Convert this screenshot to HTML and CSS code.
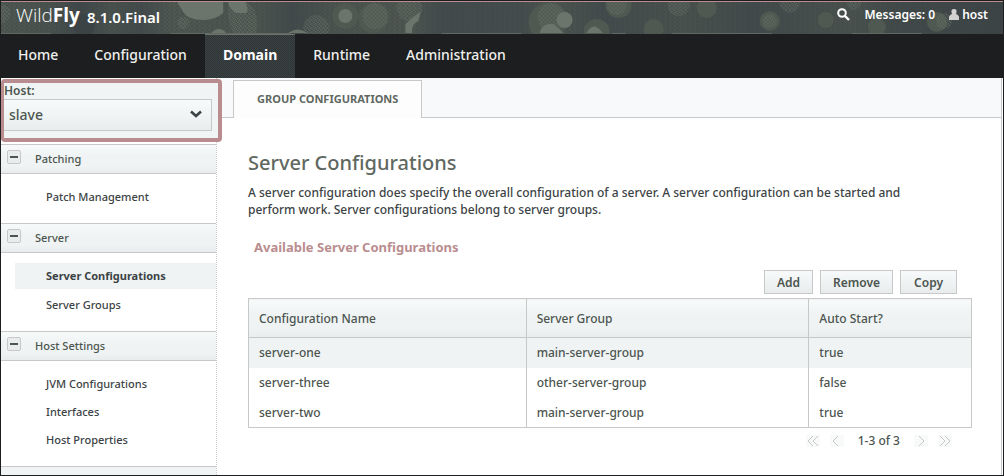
FILE: index.html
```
<!DOCTYPE html>
<html lang="en">
<head>
<meta charset="utf-8">
<title>WildFly Management</title>
<link rel="stylesheet" href="styles.css">
</head>
<body>
<div class="app">
  <header class="banner">
    <svg class="banner-art" viewBox="0 0 1001 33" preserveAspectRatio="xMidYMin slice" aria-hidden="true">
      <defs>
        <linearGradient id="shade">
          <stop offset="0" stop-color="#505952"/><stop offset=".05" stop-color="#4a534e"/><stop offset=".08" stop-color="#3f474a"/>
          <stop offset=".11" stop-color="#4a534e"/><stop offset=".14" stop-color="#434b4c"/><stop offset=".17" stop-color="#505952"/>
          <stop offset=".26" stop-color="#4c554f"/><stop offset=".29" stop-color="#424a4b"/><stop offset=".33" stop-color="#4c554f"/>
          <stop offset=".41" stop-color="#4f5851"/><stop offset=".44" stop-color="#434b4c"/><stop offset=".52" stop-color="#454d4d"/>
          <stop offset=".55" stop-color="#4f5851"/><stop offset=".6" stop-color="#434b4c"/><stop offset=".68" stop-color="#4a534e"/>
          <stop offset=".75" stop-color="#424a4b"/><stop offset=".85" stop-color="#4a534e"/><stop offset=".9" stop-color="#414949"/>
          <stop offset="1" stop-color="#3c4345"/>
        </linearGradient>
        <pattern id="grain" width="5" height="4" patternUnits="userSpaceOnUse">
          <path d="M0 0h1v1h-1zM2 1h1v1h-1zM4 2h1v1h-1zM1 3h1v1h-1z" fill="#3c4345"/>
        </pattern>
        <pattern id="speck" width="4" height="4" patternUnits="userSpaceOnUse">
          <path d="M0 0h1v1h-1zM2 1h1v1h-1zM1 2h1v1h-1zM3 3h1v1h-1z" fill="#6b756c"/>
        </pattern>
      </defs>
      <rect width="1001" height="33" fill="url(#shade)"/>
      <rect width="1001" height="33" fill="url(#grain)"/>
      <circle cx="83" cy="23" r="11" fill="#3c4345"/>
      <g fill="#4f5951">
        <circle cx="344" cy="14" r="13"/><circle cx="372" cy="16" r="15"/><circle cx="705" cy="6" r="10"/>
        <circle cx="768" cy="19" r="10"/><circle cx="546" cy="20" r="19"/><circle cx="617" cy="3" r="13"/>
        <circle cx="652" cy="27" r="10"/><circle cx="824" cy="18" r="8"/><circle cx="595" cy="30" r="13"/>
        <circle cx="875" cy="25" r="9"/><circle cx="935" cy="20" r="10"/>
      </g>
      <g fill="#6b756c">
        <path d="M176 0h46v11q-8 7-20 7q-15 0-20-8zM227 0h17q4 8 1 11h-10q-7-4-8-11z"/><circle cx="344" cy="14" r="7"/>
        <circle cx="563" cy="18" r="8"/><path d="M538 31q2-10 14-9l10 9zM585 31q7-13 16 0zM287 31q9-7 19 0z"/>
        <path d="M210 31q8-8 15 0zM404 22q8-8 15-12l-2 9q-8 4-6 12h-7z"/>
      </g>
      <g fill="url(#speck)">
        <path d="M0 2q10 2 9 10q-2 8-9 9zM227 0h19q14 12 9 32h-22q-8-14-6-32z"/>
        <circle cx="182" cy="21" r="6"/><circle cx="315" cy="26" r="13"/><circle cx="374" cy="14" r="13"/>
        <circle cx="408" cy="6" r="13"/><circle cx="550" cy="15" r="14"/><circle cx="615" cy="3" r="10"/>
        <circle cx="677" cy="3" r="11"/><circle cx="768" cy="19" r="7"/>
        <circle cx="788" cy="1" r="10"/><circle cx="852" cy="1" r="7"/><circle cx="942" cy="19" r="8"/>
      </g>
      <path d="M0 31h50M170 31h120M440 31h80M610 31h14M670 31h100M850 31h70" transform="translate(0 .5)" fill="none" stroke="#5f6861"/>
    </svg>
    <div class="brand"><span class="logo">Wild<b>Fly</b></span><span class="version">8.1.0.Final</span></div>
    <div class="tools">
      <button class="search" aria-label="Search">
        <svg width="13" height="13" viewBox="0 0 13 13"><circle cx="5" cy="5" r="3.8" fill="none" stroke="#fff" stroke-width="2"/><path d="M8 8l4 4" stroke="#fff" stroke-width="2.4"/></svg>
      </button>
      <a href="#" class="messages">Messages: 0</a>
      <a href="#" class="user"><svg width="10" height="11" viewBox="0 0 10 11" aria-hidden="true"><path d="M5 0q3 0 2.500 3q0 1.500-.7 2q3.200 1 3.200 3.500v2.500h-10v-2.500q0-2.500 3.200-3.500q-.7-.5-.7-2q-.5-3 2.500-3z" fill="#d2d2d0"/></svg>host</a>
    </div>
  </header>
  <nav class="nav">
    <a href="#">Home</a><a href="#">Configuration</a><a href="#" class="current">Domain</a><a href="#">Runtime</a><a href="#">Administration</a>
  </nav>
  <div class="body">
    <aside class="sidebar">
      <div class="host">
        <label for="host">Host:</label>
        <div class="host-field">
          <select id="host"><option>slave</option></select>
          <svg class="chevron" width="12" height="8" viewBox="0 0 12 8" aria-hidden="true"><path d="M1 1.500l5 4.500l5-4.500" fill="none" stroke="#3c4345" stroke-width="2.600"/></svg>
        </div>
      </div>
      <section>
        <h2><button class="fold" aria-label="Collapse Patching"></button>Patching</h2>
        <ul><li><a href="#">Patch Management</a></li></ul>
      </section>
      <section>
        <h2><button class="fold" aria-label="Collapse Server"></button>Server</h2>
        <ul class="roomy"><li><a href="#" class="selected">Server Configurations</a></li><li><a href="#">Server Groups</a></li></ul>
      </section>
      <section>
        <h2><button class="fold" aria-label="Collapse Host Settings"></button>Host Settings</h2>
        <ul><li><a href="#">JVM Configurations</a></li><li><a href="#">Interfaces</a></li><li><a href="#">Host Properties</a></li></ul>
      </section>
      <div class="sidebar-end"></div>
    </aside>
    <main class="main">
      <div class="tabs"><a href="#" class="tab">GROUP CONFIGURATIONS</a></div>
      <div class="content">
        <h1>Server Configurations</h1>
        <p>A server configuration does specify the overall configuration of a server. A server configuration can be started and perform work. Server configurations belong to server groups.</p>
        <h3>Available Server Configurations</h3>
        <div class="actions"><button>Add</button><button>Remove</button><button>Copy</button></div>
        <table>
          <colgroup><col class="col-name"><col class="col-group"><col class="col-auto"></colgroup>
          <thead><tr><th>Configuration Name</th><th>Server Group</th><th>Auto Start?</th></tr></thead>
          <tbody>
            <tr class="picked"><td>server-one</td><td>main-server-group</td><td>true</td></tr>
            <tr><td>server-three</td><td>other-server-group</td><td>false</td></tr>
            <tr><td>server-two</td><td>main-server-group</td><td>true</td></tr>
          </tbody>
        </table>
        <div class="pager">
          <button aria-label="First page"><svg width="14" height="12" viewBox="0 0 14 12"><path d="M7 1l-5 5l5 5M12 1l-5 5l5 5"/></svg></button>
          <button aria-label="Previous page"><svg width="14" height="12" viewBox="0 0 14 12"><path d="M8 1l-5 5l5 5"/></svg></button>
          <span>1-3 of 3</span>
          <button aria-label="Next page"><svg width="14" height="12" viewBox="0 0 14 12"><path d="M5 1l5 5l-5 5"/></svg></button>
          <button aria-label="Last page"><svg width="14" height="12" viewBox="0 0 14 12"><path d="M2 1l5 5l-5 5M7 1l5 5l-5 5"/></svg></button>
        </div>
      </div>
    </main>
  </div>
</div>
</body>
</html>
```
FILE: styles.css
```
* { box-sizing: border-box; }
body { margin: 0; font-family: "Noto Sans", "Open Sans", sans-serif; font-size: 12px; color: #3c4345; background: #fff; }
a { color: inherit; text-decoration: none; }
button { font: inherit; color: inherit; margin: 0; padding: 0; cursor: pointer; }
h1, h2, h3, p, ul { margin: 0; padding: 0; font-weight: 400; }
ul { list-style: none; }

.app { display: flex; flex-direction: column; min-height: 100vh; border: 1px solid #1c1e20; }
.banner { position: relative; display: flex; justify-content: space-between; height: 33px; padding: 0 15px; border-top: 1px solid #b98d8f; color: #fff; overflow: hidden; }
.banner-art { position: absolute; inset: 0; width: 100%; height: 100%; }
.brand, .tools { position: relative; display: flex; }
.brand { align-items: center; gap: 7px; padding-bottom: 6px; }
.logo { font-family: "Open Sans", sans-serif; font-size: 19px; font-weight: 300; line-height: 26px; }
.logo b { font-weight: 700; }
.version { font-size: 15px; line-height: 20px; padding-top: 4px; font-weight: 600; }
.tools { align-items: center; gap: 14px; padding-bottom: 8px; font-weight: 600; }
.search { display: flex; border: 0; background: none; }
.user { display: flex; align-items: center; gap: 3px; }

.nav { display: flex; height: 44px; color: #f0f0ee; background: #1c1e20; font-size: 14px; font-weight: 500; }
.nav a { padding: 0 18px; line-height: 42px; }
.nav a:first-child { padding-left: 17px; }
.nav .current { font-weight: 700; color: #fff; border-top: 1px solid #6b756c; background: repeating-conic-gradient(#3c4345 0 25%, #2e3335 0 50%) 0 0 / 2px 2px; line-height: 40px; }

.body { flex: 1; display: flex; }
.sidebar { width: 216px; flex: none; display: flex; flex-direction: column; border-right: 1px dotted #c8c8c8; font-size: 11px; }
.host { position: relative; z-index: 1; height: 63px; margin: 1px -6px 2px 0; padding: 0 6px 4px 0; border: 4px solid #b98d8f; border-left-width: 3px; border-radius: 4px; background: #f1f4f5; color: #4c554f; }
.host label { display: block; line-height: 16px; font-size: 12px; font-weight: 600; }
.host-field { position: relative; }
.host select { appearance: none; display: block; width: 100%; height: 32px; padding: 0 5px 2px; border: 1px solid #c8c8c8; border-left: 0; border-radius: 0; font: inherit; font-size: 14px; font-weight: 500; color: inherit; background: linear-gradient(#f8fafa, #eff3f4 60%, #e9eced); }
.chevron { position: absolute; right: 10px; top: 11px; }
.sidebar h2 { display: flex; align-items: center; gap: 14px; height: 30px; padding: 0 0 2px 6px; border: solid #c8c8c8; border-width: 1px 0; background: linear-gradient(#f8fafa, #eff3f4 40%, #eff3f4 75%, #e9eced); font-size: 11px; font-weight: 500; color: #4c554f; }
.fold { position: relative; width: 14px; height: 14px; margin-bottom: 2px; border: 1px solid #c8c8c8; border-radius: 2px; background: #e9eced; }
.fold::before { content: ""; position: absolute; left: 2px; right: 2px; top: 5px; height: 2px; background: #4c554f; }
.sidebar ul { padding: 10px 0 13px 14px; font-weight: 500; }
.sidebar li a { display: block; padding-left: 31px; line-height: 26px; }
.sidebar li + li { margin-top: 2px; }
.sidebar .roomy li + li { margin-top: 3px; }
.sidebar .selected { background: #eff3f4; font-weight: 700; }
.sidebar-end { flex: 1; border-top: 1px solid #c8c8c8; background: #f1f4f5; }

.main { flex: 1; min-width: 0; margin-right: 1px; border-right: 1px solid #c8c8c8; }
.tabs { display: flex; height: 40px; padding: 2px 16px 0; border-bottom: 1px solid #c8c8c8; background: #f8f9fa; }
.tab { height: 38px; padding: 0 23px; border: 1px solid #c8c8c8; border-bottom: 0; background: #fdfdfd; color: #5f6861; font-size: 11px; font-weight: 700; line-height: 36px; }
.content { padding: 31px 29px 0 31px; }
h1 { font-size: 20px; line-height: 28px; color: #5f6861; font-weight: 500; }
.content p { margin-top: 7px; padding-right: 44px; line-height: 17px; font-weight: 500; }
h3 { margin: 20px 6px 0; font-size: 13px; font-weight: 700; line-height: 18px; color: #b98d8f; }
.actions { display: flex; justify-content: flex-end; gap: 7px; margin: 14px 15px 4px 0; }
.actions button { height: 24px; padding: 0 13px; border: 1px solid #c8c8c8; background: linear-gradient(#f8fafa, #eff3f4 50%, #e9eced); font-size: 12px; font-weight: 600; color: #4c554f; }
.actions button:not(:last-child) { padding: 0 12px; }
table { width: 100%; table-layout: fixed; border-collapse: collapse; border: 1px solid #c8c8c8; color: #4c554f; font-weight: 500; }
.col-name { width: 38.4%; }
.col-group { width: 39.1%; }
th, td { height: 30px; padding: 0 10px; text-align: left; font-weight: 500; border-right: 1px solid #c8c8c8; }
th { height: 39px; border-bottom: 1px solid #c8c8c8; background: linear-gradient(#f8fafa, #eff3f4 40%, #eff3f4 75%, #e9eced); }
.picked { background: #eff3f4; }
.pager { display: flex; justify-content: flex-end; align-items: center; gap: 10px; margin: 3px 20px 0 0; line-height: 20px; font-weight: 500; color: #4c554f; }
.pager span { padding: 0 4px; }
.pager button { display: flex; border: 0; background: #f8fafa; }
.pager path { fill: none; stroke: #c8c8c8; stroke-width: 1; }
```
